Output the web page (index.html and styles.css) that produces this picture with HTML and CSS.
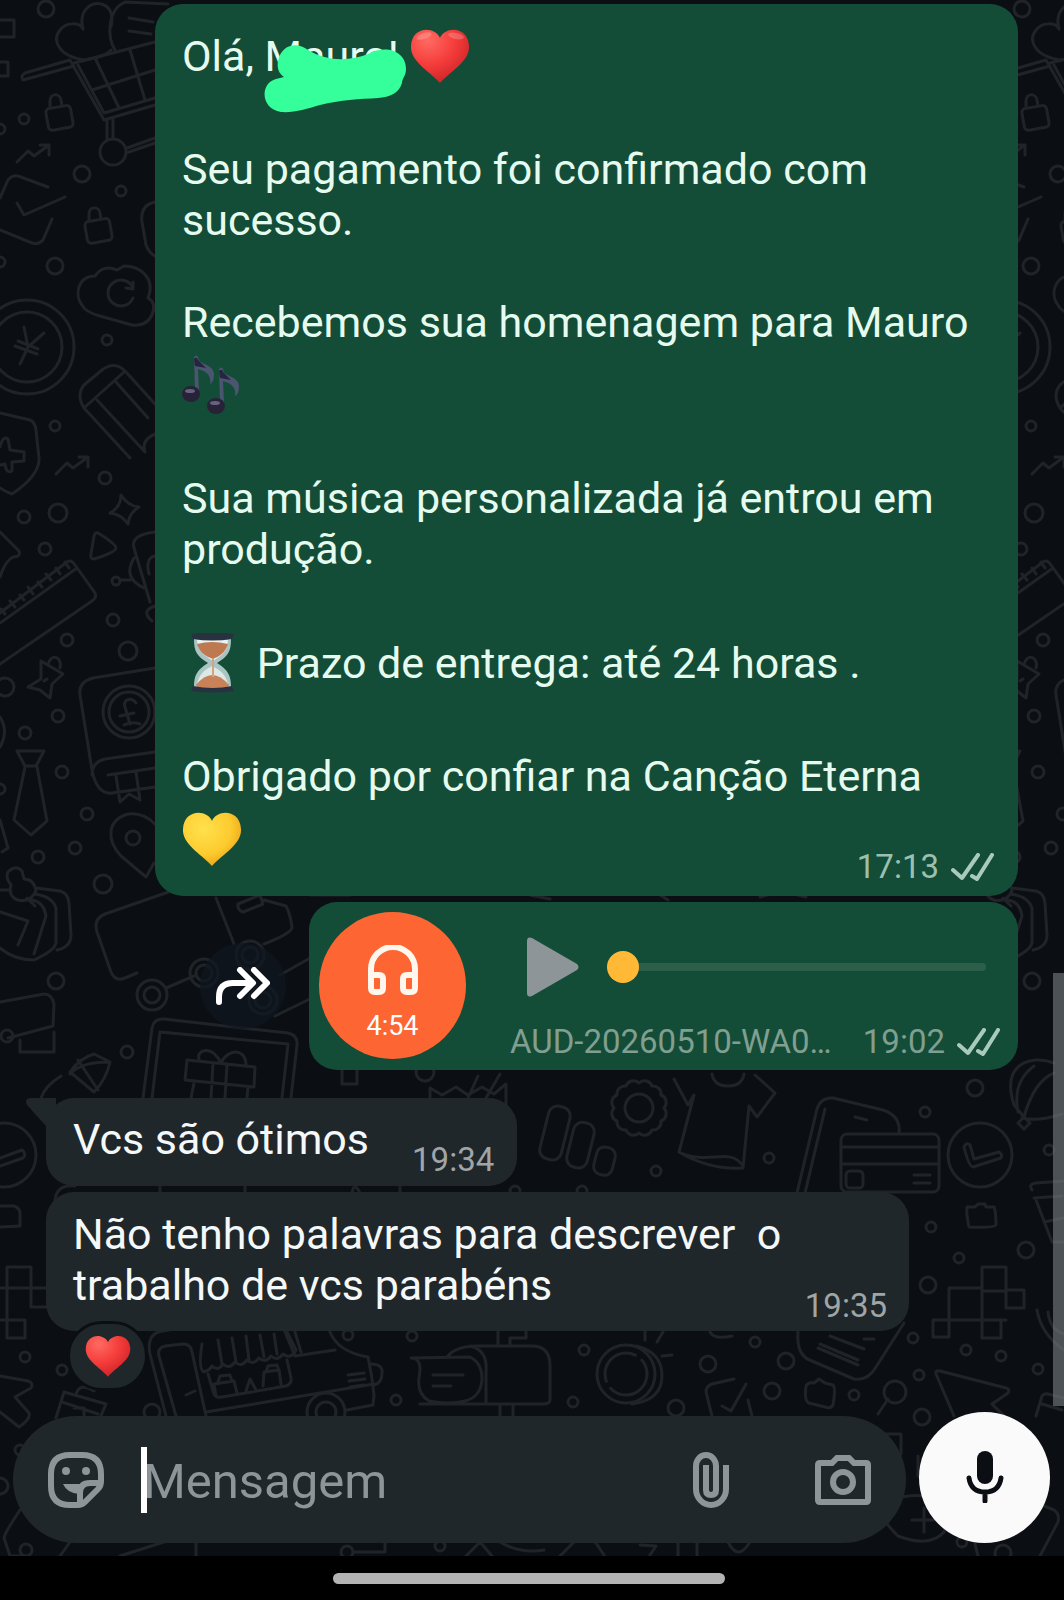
FILE: index.html
```html
<!DOCTYPE html>
<html lang="pt-BR">
<head>
  <meta charset="UTF-8">
  <title>Conversa</title>
  <meta name="viewport" content="width=device-width, initial-scale=1">
  <link rel="stylesheet" href="styles.css">
</head>
<body>
  <svg class="wallpaper" width="1064" height="1556" viewBox="0 0 1064 1556" aria-hidden="true">
    <defs>
      <g id="doodles">
        <circle cx="46" cy="9" r="8"/><circle cx="24" cy="119" r="5"/><circle cx="0" cy="129" r="5"/>
        <circle cx="121" cy="191" r="5"/><circle cx="82" cy="174" r="8"/><circle cx="55" cy="266" r="8"/>
        <circle cx="0" cy="262" r="5"/><circle cx="107" cy="340" r="5"/><circle cx="55" cy="426" r="5"/>
        <path d="M0 20h14v17H0M0 62h8v14H0"/>
        <path d="M84 60C58 56 52 40 60 30c6-8 20-8 23-1C78 10 92 0 104 5c8 3 9 14 7 22M111 50c-4 5-14 8-27 10"/>
        <path d="M168 4L125 2c-18 8-18 35-10 48M129 18l24 4M129 31l22 3"/>
        <!-- cart -->
        <path d="M70 60L25 73q-5 3-2 7l51-14M70 60l34 60 51-15M78 65l26 48 51-15M96 60l23 48M130 50l15 50M74 63l81-21M92 90l63-20M107 120v19M113 118v20M127 148l28-10M126 153l29-10"/>
        <circle cx="113" cy="152" r="13"/>
        <!-- locks -->
        <g id="lock"><rect x="47" y="107" width="25" height="22" rx="4" transform="rotate(-10 59 118)"/><path d="M50 107v-6c0-8 10-8 11-1l1 6"/></g>
        <use href="#lock" x="39" y="113"/>
        <path id="trend" d="M17 162l11-11 6 5 15-11m-9 0h9v10"/>
        <use href="#trend" x="39" y="312"/>
        <path d="M0 198l8-18q4-5 10-4l30 11M17 203l7 12 41-18M52 219l-9 21q-4 5-11 3L0 230"/>
        <path d="M155 202q-15 3-13 20l4 23q3 8 9 11"/>
        <path d="M95 276C78 276 74 295 82 305q3 7 18 11l32 9q14 2 20-10 5-12-4-17c8-20-8-32-24-32l-7 4q-14-6-22 6M133 288a13 13 0 1 0 0 10M133 282v7l-7-1"/>
        <circle cx="27" cy="347" r="47"/><circle cx="27" cy="347" r="35"/>
        <path d="M24 327l4 20-8 17M44 333l-16 14M15 346l22 8M18 341l20 8"/>
        <path d="M84 408q-8-13 0-23l18-15q13-10 24 2l29 32M84 408l46 50M124 372l-40 36M116 382l32 36M97 400l48 52M155 434q-14 6-10 18"/>
        <path d="M0 413l30 7q5 2 6 10l3 28q1 17-27 36-6-2-12-6M0 447q3-12 8-8l2 11 14 2v9l-12 1v9q-6 3-7-7l-5 1"/>
        <circle cx="105" cy="478" r="6"/><circle cx="24" cy="517" r="6"/><circle cx="58" cy="513" r="9"/>
        <circle cx="45" cy="549" r="6"/><circle cx="113" cy="620" r="6"/><circle cx="67" cy="640" r="6"/>
        <circle cx="128" cy="651" r="9"/><circle cx="5" cy="687" r="9"/><circle cx="58" cy="716" r="6"/>
        <circle cx="25" cy="733" r="6"/><circle cx="62" cy="772" r="6"/><circle cx="87" cy="814" r="6"/>
        <circle cx="75" cy="848" r="6"/><circle cx="38" cy="857" r="6"/><circle cx="103" cy="884" r="9"/>
        <circle cx="0" cy="789" r="5"/><circle cx="116" cy="581" r="4"/>
        <path d="M121 495q7 11 18 12-10 6-11 17-7-10-18-11 11-6 11-18zM98 533q18 11 18 15t-22 11q-4 0-3-5l3-18q1-4 4-3z"/>
        <path d="M155 532q-25 3-21 16l16 54M121 580h9M134 558q-12 20 10 30M155 556q-10 2-6 18M155 606q-15 5-3 15"/>
        <path d="M0 532l19 19q2 6-6 6-8 4-13 20"/>
        <!-- ruler -->
        <path d="M0 613l67-51q4-3 8 3l20 28q2 5-3 8L0 664M0 623l77-55M5 614l-4-5M15 607l-5-6M24 600l-4-5M33 594l-5-7M42 587l-4-5M51 580l-5-6M60 574l-4-6M69 568l-4-6"/>
        <path d="M41 661l22 13-11 10-2 14-10-8-12-3 13-8zM48 665c2-12 15-9 12 3M44 681l3-2"/>
        <!-- book -->
        <path d="M155 668l-62 10q-15 4-13 17l12 75q5 25 20 23l43-6M155 752l-50 7q-13 3-13 16M108 775l47-7M116 776l4 26 9-8 11 6-4-28M136 703c-4-7-14-3-11 4l5 17M120 716l14-3M124 725q8-4 16-1"/>
        <circle cx="129" cy="712" r="26"/><circle cx="129" cy="712" r="20"/>
        <!-- tie -->
        <path d="M17 751h27l-8 15h-11zM25 767l-11 53 17 15 16-14-10-54"/>
        <path d="M0 717q9 14 0 30M0 820l8 28-6 4"/>
        <path d="M146 877l-25-21c-15-16-14-36 7-42q15-2 27 10M146 877l8-14"/><circle cx="133" cy="838" r="7"/>
        <!-- pinned notes -->
        <path d="M8 872q8-8 14-1l2 8q10 0 12 12-6 12-18 9-10-3-7-15-6-8-3-13zM27 898l8 8M0 890h8M36 888l24 3q8 2 9 12l2 32q0 12-14 15M34 894q18 2 22 14l0 34q0 8-22 18-20 0-34-12M32 900q12 2 14 16l-12 38M0 912l28 9-10 24"/>
        <circle cx="56" cy="981" r="8"/>
      </g>
    </defs>
    <use href="#doodles"/>
    <use href="#doodles" x="976"/>

    <!-- van, tablet and gift -->
    <path d="M180 888l-75 26q-12 5-8 18l14 40q4 10 14 6l12-5M166 988l28-12M216 898l18 46M238 904l22-9 3 9-20 8q-6-2-5-8zM264 900l22 6q5 10 6 22-2 6-28 16M280 975l32-18M275 1016l37-18"/>
    <circle cx="250" cy="955" r="14"/><circle cx="250" cy="955" r="8"/><circle cx="204" cy="973" r="14"/><circle cx="204" cy="973" r="8"/>
    <circle cx="263" cy="1000" r="14"/><circle cx="263" cy="1000" r="8"/><circle cx="152" cy="995" r="15"/><circle cx="152" cy="995" r="8"/>
    <path d="M143 1098l9-70q2-10 12-9l124 14q10 2 9 12l-6 53M152 1098l8-66 128 12-6 54M187 1060l68 7-1 20-69-7zM194 1083l-3 15M248 1087l-1 11M213 1063l-2 35M227 1064l-2 34M221 1063c-10-20-25-12-22-4M221 1063c8-16 26-14 25 3"/>
    <path d="M0 1002l44-8q8 0 10 10l-1 22-45 12M20 1040v12h34v-20M70 1072q10-14 24-18l16 8q-4 18-16 30zM41 1098q4-12 20-22M78 1060l20 30M110 1062q-30 0-40 12"/>
    <circle cx="7" cy="1036" r="6"/><circle cx="127" cy="1052" r="6"/><circle cx="425" cy="1072" r="9"/>
    <path d="M342 1070v14h15v-14M478 1076l-10 22M500 1074l-14 24M430 1098v-10l12 7 14-8 12 8 14-8 12 7 12-10v40M310 895h40M530 895l20 4M660 895l8 5M760 897l22-6 24 6"/>

    <!-- chart, gear, t-shirt, card -->
    <rect x="544" y="1106" width="22" height="54" rx="9" transform="rotate(14 555 1133)"/>
    <rect x="570" y="1122" width="21" height="46" rx="9" transform="rotate(14 580 1145)"/>
    <rect x="595" y="1147" width="19" height="28" rx="8" transform="rotate(14 604 1161)"/>
    <circle cx="639" cy="1108" r="14"/>
    <path d="M664 1108a8 8 0 0 1-3 13a8 8 0 0 1-9 9a8 8 0 0 1-13 3a8 8 0 0 1-13-3a8 8 0 0 1-9-9a8 8 0 0 1-3-13a8 8 0 0 1 3-13a8 8 0 0 1 9-9a8 8 0 0 1 13-3a8 8 0 0 1 13 3a8 8 0 0 1 9 9a8 8 0 0 1 3 13z"/>
    <path d="M674 1079l14 26 6-10-15 57q30 18 64 16l6-62 8 11 18-24-20-18M679 1152c30 14 50-6 64 14M712 1074q2 12 16 12t16-12"/>
    <path d="M797 1193l20-84q4-12 16-11l50 12q18 6 16 23M805 1193l20-84M855 1117l12 3"/>
    <rect x="841" y="1134" width="98" height="58" rx="6"/><path d="M841 1147h98M841 1164h98M914 1175h16M914 1183h16"/><rect x="846" y="1171" width="17" height="17" rx="4"/>
    <circle cx="980" cy="1155" r="32"/><path d="M970 1145l4 14 25-7q4 3 2 6l-28 9q-4 0-9-20 2-5 6-2z"/>
    <circle cx="4" cy="1155" r="32"/><path d="M0 1158l22-8q5 4 1 8l-23 8M0 1206h14q6 2 6 8v12l-20 1"/>
    <path d="M967 1207h8l3-3h7l1 3h8q2 4 2 18-2 3-27 2-3-14-2-20z"/>
    <path d="M1024 1117l-10-12c-14-44 20-50 40-42M1018 1112q-6-30 16-46M1024 1117q10-36 30-44M1022 1118q16 4 40-4M1024 1117l6 6-6 6-6-6zM1032 1190q-4-6 4-7l28-2M1034 1198l28-2M1036 1200l16 42h12M1044 1222l20-4M1037 1310q4 24 27 40M1048 1312q2 18 16 22"/>
    <circle cx="975" cy="1088" r="8"/><circle cx="925" cy="1112" r="5"/><circle cx="656" cy="1171" r="5"/><circle cx="769" cy="1158" r="5"/><circle cx="1049" cy="1150" r="5"/><circle cx="931" cy="1227" r="5"/><circle cx="959" cy="1258" r="5"/><circle cx="1026" cy="1250" r="8"/><circle cx="928" cy="1285" r="8"/><circle cx="582" cy="1191" r="5"/><circle cx="515" cy="1191" r="5"/><circle cx="913" cy="1338" r="5"/><circle cx="966" cy="1350" r="5"/><circle cx="1001" cy="1356" r="5"/><circle cx="1038" cy="1369" r="5"/><circle cx="919" cy="1375" r="5"/>
    <path d="M949 1288h33v32h-33zM982 1267h24v24h-24zM1006 1290h18v18h-18zM933 1320h16v17h-16zM982 1320h19v18h-19zM982 1291v29h24"/>
    <path d="M0 1288h46M7 1267h24v40h15M7 1267v53h18v18H7v-18M0 1320h7M55 1200q2-16 20-14M160 1187v6M245 1187v6M400 1187v6M352 1193q2-12 8 0"/>

    <!-- food truck, mailbox, coin, note -->
    <path d="M166 1416l-16-62q-4-20 12-23l95-14M176 1416l-17-60q-2-8 6-10l18-2q8 0 9 8l14 64M285 1332l10 24 40-6M330 1332q8 20 38 25 4 18 6 38l-1 10-26 5M206 1412l168-28M186 1395l9-4M295 1332l6 20M202 1344q-4 26 2 28 6-2 8-6 6 6 11-2 6 6 12-2 6 6 12-2 6 6 12-2 6 6 12-2 6 6 12-2 8 6 13-4l-10-20M218 1340l4 24M232 1338l4 24M246 1336l3 24M260 1335l4 22M274 1334l3 20M208 1374l6 20q2 4 8 3l64-11q6-2 5-8l-4-18M216 1396l-2-12 20-3 3 12M218 1382l2-6 10-1 2 6M246 1391l4-12 6 11M263 1386l1-14 15-2 2 14M266 1372l2-6 9-1 2 6M348 1375l16-2M349 1381l16-2M350 1387l14-2"/>
    <path d="M371 1364q12 0 11 9 0 10-8 12"/><circle cx="326" cy="1412" r="19"/><circle cx="326" cy="1412" r="10"/><circle cx="152" cy="1412" r="8"/>
    <path d="M411 1358q12 0 8 20-2 16 10 23 20 4 36 0 16-4 17-22 0-16-12-22zM433 1375h30M433 1386h18M448 1356q8-10 30-10h54q18 0 18 20v34q0 4-8 4H420M470 1346q18 4 16 26v32M498 1332v14M510 1346v-8h16v-7M500 1404v12M513 1404v12"/>
    <circle cx="626" cy="1374" r="29"/><circle cx="626" cy="1374" r="21" stroke-dasharray="50 8"/><path d="M636 1346q26 6 26 30t-30 28M645 1332v8M663 1332l-6 10M662 1356l10-1M710 1332q4 8 22 4"/>
    <path d="M798 1332q-2 24 14 29l42 18q14 2 22-12l28-44M820 1344l38 16M830 1336l34 13M818 1348l40 17M864 1339l10 0"/>
    <path d="M712 1416l-6-24q0-6 6-8l22-5M722 1406l9 5 15-27M748 1400l4 16M806 1386q2-4 8-3l5-4 6 4 8 2q3 2 0 20-2 4-8 2l-16-4q-5-2-3-17zM878 1414l10-15M954 1416l-18-42q-1-4 4-3l66 17q4 1 2 5l-16 11 18 18M1036 1416l6-20q2-3 6-2l16 4M1042 1404l20 6"/>
    <circle cx="895" cy="1392" r="11"/><circle cx="584" cy="1350" r="5"/><circle cx="708" cy="1364" r="8"/><circle cx="786" cy="1361" r="8"/><circle cx="755" cy="1342" r="5"/><circle cx="772" cy="1391" r="8"/><circle cx="854" cy="1395" r="5"/><circle cx="573" cy="1402" r="5"/><circle cx="676" cy="1408" r="8"/><circle cx="922" cy="1417" r="8"/><circle cx="412" cy="1336" r="5"/><circle cx="348" cy="1335" r="5"/><circle cx="396" cy="1400" r="5"/><circle cx="25" cy="1357" r="5"/><circle cx="62" cy="1370" r="5"/>
    <path d="M0 1376l28 5q6 2 3 7l-16 9 14 16q2 6-10 14L0 1412M56 1418l8-26 42 12-6 14M76 1394q4-12 18-3M62 1402l36 12M74 1408h10v8"/>

    <!-- below the input -->
    <circle cx="0" cy="1486" r="8"/><circle cx="20" cy="1450" r="5"/><circle cx="26" cy="1550" r="6"/><circle cx="347" cy="1552" r="6"/><circle cx="440" cy="1546" r="5"/><circle cx="962" cy="1542" r="5"/><circle cx="1003" cy="1553" r="8"/>
    <path d="M20 1510q-16 24-16 28l6 18h14M60 1556l10-14M120 1556l44-14M196 1542v14M353 1552h32v-10M466 1556l14-14 12 14M500 1542q20 12 44 8M560 1556l14-14M596 1543l8 12M640 1545l16 1-6 9M678 1542v14M697 1542v14M728 1542q10 20 22 0M885 1434h16v20M918 1456v20M890 1500q20-6 34-4 30 12 20 36-14 16-46 4-10-10-12-14M924 1508v24M912 1520h24M1030 1500l24 10q6 4 4 12l-18 34M974 1540l4 16"/>
  </svg>

  <main class="chat">
    <article class="bubble sent text-msg">
      <p>Olá, <span class="name">Mauro!<svg class="scribble" viewBox="0 0 142 68" aria-hidden="true"><path fill="#34ff9b" d="M20 32C14 28 13 22 14 16 18-2 34-3 44 5 64 17 86 16 104 9 122-1 142 6 142 24 142 31 138 33 138 38 135 48 126 52 114 53 96 54 76 55 56 60 42 64 30 68 17 67-4 64-4 38 12 34z"/></svg></span> <svg class="emoji" viewBox="0 0 60 60" role="img" aria-label="coração vermelho">
        <defs>
          <radialGradient id="red" cx=".3" cy=".2" r=".9"><stop offset="0" stop-color="#ff6a62"/><stop offset=".5" stop-color="#f53d3b"/><stop offset="1" stop-color="#c81f25"/></radialGradient>
          <radialGradient id="yellow" cx=".35" cy=".3" r=".8"><stop offset="0" stop-color="#ffe14d"/><stop offset=".6" stop-color="#fdcb2e"/><stop offset="1" stop-color="#e79b16"/></radialGradient>
        </defs>
        <path id="heart" d="M30 12C25 0 2 0 1 20c-1 15 17 24 29 37 12-13 30-22 29-37C58 0 35 0 30 12z" fill="url(#red)"/>
        <ellipse cx="14" cy="10" rx="8" ry="3" fill="#fff" opacity=".2" transform="rotate(-18 14 10)"/>
        <ellipse cx="46" cy="10" rx="8" ry="3" fill="#fff" opacity=".2" transform="rotate(12 46 10)"/>
      </svg></p>
      <p>Seu pagamento foi confirmado com sucesso.</p>
      <p>Recebemos sua homenagem para Mauro <svg class="emoji" viewBox="0 0 60 60" role="img" aria-label="notas musicais">
        <g id="note"><path d="M12 2q2-3 4 0c0 8 16 7 16 17q0 8-4 10c2-10-6-13-12-15l1 22h-4z" fill="#4a5570"/><path d="M12 4q3-3 4 1l8 8-11-2z" fill="#272440"/><ellipse cx="9" cy="39" rx="9" ry="8" fill="#272238"/><ellipse cx="8" cy="36" rx="5" ry="2" fill="#66637f"/></g>
        <use href="#note" x="25" y="12"/>
      </svg></p>
      <p>Sua música personalizada já entrou em produção.</p>
      <p><svg class="emoji" viewBox="0 0 60 60" role="img" aria-label="ampulheta">
        <path d="M12 6h37c0 13-3 17-14 24 11 7 14 12 14 24H12c0-12 3-17 14-24C15 23 12 19 12 6z" fill="#a9c4c2"/>
        <path d="M15 7h31c-1 11-4 14-15 21-11-7-15-10-16-21z" fill="#e9f2f0"/>
        <path d="M15 11q15-4 31 0c-3 9-8 12-15 15-8-3-13-6-16-15z" fill="#bd7a50"/>
        <path d="M30 33c11 5 14 11 16 18H15c2-8 5-13 15-18z" fill="#dce9e7"/>
        <path d="M14 52q16-20 33 0l-2 3H16z" fill="#c98257"/>
        <rect x="30" y="26" width="2" height="18" fill="#d9a27c"/>
        <path d="M9 1q21-3 43 0l-2 5q-20 3-39 0zM11 53q20 4 39 0l2 5q-21 3-43 0z" fill="#283140"/>
      </svg> <span class="after-emoji">Prazo de entrega: até 24 horas .</span></p>
      <p>Obrigado por confiar na Canção Eterna <svg class="emoji" viewBox="0 0 60 60" role="img" aria-label="coração amarelo"><path d="M30 12C25 0 2 0 1 20c-1 15 17 24 29 37 12-13 30-22 29-37C58 0 35 0 30 12z" fill="url(#yellow)"/></svg></p>
      <div class="meta"><time>17:13</time><svg class="ticks" viewBox="0 0 43 28" aria-hidden="true"><path id="double-check" d="M2 17l9 8L27 2M21 23l5 3L41 2"/></svg></div>
    </article>

    <div class="audio-row">
      <button class="forward" aria-label="Encaminhar"><svg viewBox="0 0 54 38" width="54" height="38"><path d="M3 35v-5q0-14 14-14h18M24 3l13 13-13 13M38 3l13 13-13 13"/></svg></button>
      <article class="bubble sent audio">
        <div class="cover">
          <svg viewBox="0 0 50 50" width="50" height="50" aria-hidden="true"><path d="M3 43V24a22 22 0 0 1 44 0v19q0 4-4 4h-4q-4 0-4-4V34q0-4 4-4h8M3 30h8q4 0 4 4v9q0 4-4 4H7q-4 0-4-4"/></svg>
          <span>4:54</span>
        </div>
        <div class="player">
          <div class="controls">
            <button class="play" aria-label="Reproduzir"><svg viewBox="0 0 52 60" width="52" height="60"><path d="M0 4q0-5 5-3l45 26q3 3 0 6L5 59q-5 2-5-3z"/></svg></button>
            <input class="seek" type="range" min="0" max="294" value="0" aria-label="Posição do áudio">
          </div>
          <div class="file">
            <span class="file-name">AUD-20260510-WA0…</span>
            <div class="file-meta"><time>19:02</time><svg class="ticks" viewBox="0 0 43 28" aria-hidden="true"><use href="#double-check"/></svg></div>
          </div>
        </div>
      </article>
    </div>

    <article class="bubble received short">
      <svg class="tail" viewBox="0 0 30 32" aria-hidden="true"><path d="M4 0h26v32H20V28L1 7Q-2 1 4 0z"/></svg>
      <p>Vcs são ótimos</p>
      <time>19:34</time>
    </article>

    <article class="bubble received long">
      <p>Não tenho palavras para descrever &nbsp;o trabalho de vcs parabéns</p>
      <time>19:35</time>
      <button class="reaction" aria-label="Reação: coração"><svg viewBox="0 0 60 60" width="46" height="46"><use href="#heart"/></svg></button>
    </article>
    <div class="scrollbar"></div>
  </main>

  <form class="composer">
    <div class="field">
      <button type="button" aria-label="Figurinhas"><svg viewBox="0 0 56 56" width="56" height="56">
        <path class="line" d="M53 29V22Q53 3 34 3H22Q3 3 3 22v12q0 19 19 19h8q4 0 7-3l13-13q3-3 3-8zM53 31H42q-10 0-10 10v12"/>
        <circle cx="18" cy="19" r="4"/><circle cx="38" cy="19" r="4"/><path d="M15 32h21l-5 10q-12-1-16-10z"/></svg></button>
      <input class="message" type="text" placeholder="Mensagem" aria-label="Mensagem">
      <button type="button" aria-label="Anexar"><svg viewBox="0 0 36 56" width="36" height="56"><path class="line" d="M33 13v24a15 16 0 0 1-30 0V14a10 11 0 0 1 20 0v24q0 5-5 5t-5-5V13"/></svg></button>
      <button type="button" aria-label="Câmera"><svg viewBox="0 0 56 50" width="56" height="50"><path class="line" d="M5 8h12l5-5h12l5 5h12q2 0 2 2v35q0 2-2 2H5q-2 0-2-2V10q0-2 2-2z"/><circle class="line" cx="28" cy="27" r="10"/></svg></button>
    </div>
    <button class="mic" type="button" aria-label="Gravar áudio"><svg viewBox="0 0 38 52" width="38" height="52"><rect x="11" y="0" width="16" height="33" rx="8"/><path d="M3 27q2 14 16 14t16-14M19 41v9"/></svg></button>
  </form>
  <footer class="nav-bar"><div class="home-handle"></div></footer>
</body>
</html>
```
FILE: styles.css
```css
:root {
  --bg: #0b0f14;
  --doodle: #202428;
  --sent: #144d37;
  --received: #20272a;
  --muted: #8d9598;
  --text: #f4f8f9;
}

* { box-sizing: border-box; }

body {
  margin: 0;
  min-height: 100vh;
  display: flex;
  flex-direction: column;
  position: relative;
  overflow-x: hidden;
  background: var(--bg);
  color: var(--text);
  font-family: Roboto, "Noto Sans", sans-serif;
  font-size: 43px;
  line-height: 51px;
}

p { margin: 0; }

button {
  display: flex;
  flex: none;
  align-items: center;
  justify-content: center;
  padding: 0;
  border: none;
  background: none;
  cursor: pointer;
}

.wallpaper {
  position: absolute;
  top: 0;
  left: 0;
  z-index: -1;
  fill: none;
  stroke: var(--doodle);
  stroke-width: 3;
  stroke-linecap: round;
  stroke-linejoin: round;
}

.chat {
  flex: 1;
  display: flex;
  flex-direction: column;
  gap: 6px;
  position: relative;
  padding: 4px 46px 0;
}

.bubble {
  position: relative;
  border-radius: 28px;
}

.sent {
  background: var(--sent);
  align-self: flex-end;
}

.received {
  background: var(--received);
  align-self: flex-start;
}

time {
  font-size: 33px;
  line-height: 38px;
  color: #a0a5a7;
}

/* text message */
.text-msg {
  width: 100%;
  max-width: 863px;
  padding: 15px 27px 20px;
  color: #e6fbf0;
}

.text-msg p + p { margin-top: 51px; }

.emoji {
  width: 60px;
  height: 60px;
  margin: 7px 0;
  vertical-align: -22px;
}

.after-emoji { margin-left: 4px; }

.name { position: relative; }

.scribble {
  position: absolute;
  left: -1px;
  top: 14px;
  width: 142px;
  height: 68px;
}

.meta {
  position: absolute;
  right: 24px;
  bottom: 10px;
}

.meta, .file-meta {
  display: flex;
  align-items: center;
  gap: 12px;
}

.meta time { color: #9cc0b0; }
.file-meta time { color: #809f91; }

.ticks {
  width: 43px;
  height: 28px;
  fill: none;
  stroke: #a9cbbc;
  stroke-width: 4;
  stroke-linecap: round;
  stroke-linejoin: round;
}

/* audio message */
.audio-row {
  display: flex;
  justify-content: flex-end;
  align-items: center;
  gap: 23px;
}

.forward {
  width: 86px;
  height: 86px;
  border-radius: 50%;
  background: rgba(15, 23, 32, 0.7);
}

.forward svg {
  fill: none;
  stroke: #fff;
  stroke-width: 6;
  stroke-linecap: round;
  stroke-linejoin: round;
}

.audio {
  display: flex;
  width: 100%;
  max-width: 709px;
  padding: 10px 18px 9px 10px;
}

.cover {
  flex: none;
  display: flex;
  flex-direction: column;
  align-items: center;
  gap: 15px;
  width: 147px;
  height: 147px;
  padding-top: 33px;
  border-radius: 50%;
  background: #fd6633;
  color: #fff;
  font-size: 27px;
  line-height: 32px;
}

.cover svg {
  fill: none;
  stroke: #fff6ee;
  stroke-width: 6;
}

.player {
  flex: 1;
  display: flex;
  flex-direction: column;
  gap: 26px;
  padding: 25px 0 0 44px;
}

.controls {
  display: flex;
  align-items: center;
  gap: 28px;
  padding: 0 14px 0 17px;
}

.play svg { fill: #8d9598; }

.seek {
  appearance: none;
  flex: 1;
  min-width: 0;
  height: 32px;
  margin: 0;
  background: none;
}

.seek::-webkit-slider-runnable-track {
  height: 8px;
  border-radius: 4px;
  background: #2b5f49;
}

.seek::-webkit-slider-thumb {
  appearance: none;
  width: 32px;
  height: 32px;
  margin-top: -12px;
  border-radius: 50%;
  background: #ffb937;
}

.file {
  display: flex;
  align-items: center;
  justify-content: space-between;
  font-size: 33px;
  line-height: 38px;
  color: #809f91;
}

/* received messages */
.short {
  display: flex;
  align-items: flex-end;
  gap: 43px;
  margin-top: 22px;
  padding: 16px 23px 7px 27px;
}

.short p { margin-bottom: 14px; }

.tail {
  position: absolute;
  top: 0;
  left: -20px;
  width: 30px;
  height: 32px;
  fill: var(--received);
}

.long {
  width: 100%;
  max-width: 863px;
  padding: 17px 110px 20px 27px;
}

.long time {
  position: absolute;
  right: 22px;
  bottom: 6px;
}

.reaction {
  position: absolute;
  left: 21px;
  bottom: -60px;
  width: 81px;
  height: 70px;
  border: 3px solid var(--bg);
  border-radius: 35px;
  background: var(--received);
}

.scrollbar {
  position: absolute;
  right: 0;
  bottom: 5px;
  width: 11px;
  height: 433px;
  background: rgba(120, 126, 130, 0.6);
}

/* composer */
.composer {
  display: flex;
  align-items: center;
  gap: 13px;
  padding: 0 14px 13px 13px;
}

.field {
  flex: 1;
  min-width: 0;
  display: flex;
  align-items: center;
  height: 127px;
  margin-top: 5px;
  padding: 0 35px;
  border-radius: 64px;
  background: var(--received);
}

.field button + button { margin-left: 86px; }

.field svg { fill: var(--muted); }

.field .line {
  fill: none;
  stroke: var(--muted);
  stroke-width: 6;
}

.message {
  flex: 1;
  min-width: 0;
  height: 66px;
  margin-left: 37px;
  padding: 4px 0 0;
  border: none;
  border-left: 6px solid #fff;
  outline: none;
  background: none;
  color: var(--text);
  font: inherit;
  font-size: 49px;
  text-indent: -4px;
}

.message::placeholder {
  color: var(--muted);
  opacity: 1;
}

.mic {
  width: 131px;
  height: 131px;
  border-radius: 50%;
  background: #fafafa;
}

.mic svg {
  fill: #0b0f14;
}

.mic path {
  fill: none;
  stroke: #0b0f14;
  stroke-width: 5;
  stroke-linecap: round;
}

.nav-bar {
  display: flex;
  justify-content: center;
  height: 44px;
  padding: 17px 6px 0 0;
  background: #000;
}

.home-handle {
  width: 37%;
  height: 11px;
  border-radius: 6px;
  background: #b3b3b3;
}
```
